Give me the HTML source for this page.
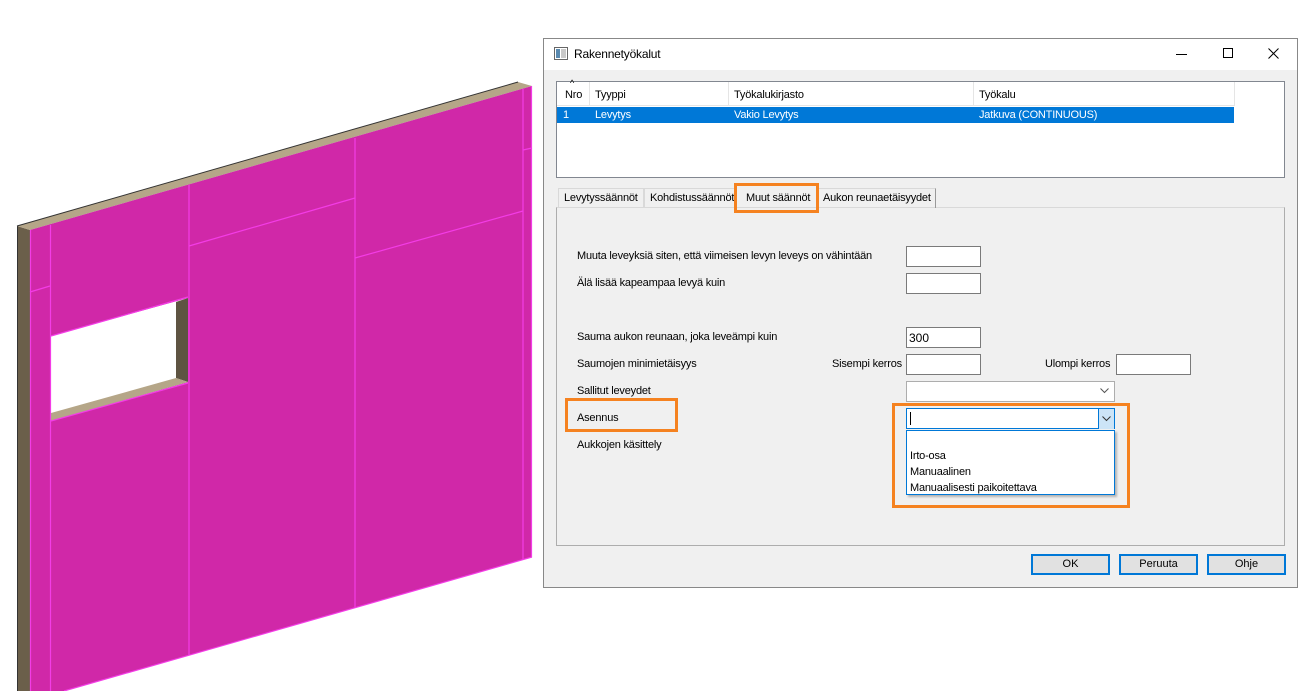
<!DOCTYPE html>
<html><head><meta charset="utf-8"><style>
*{margin:0;padding:0;box-sizing:border-box}
body{width:1308px;height:691px;background:#fff;position:relative;overflow:hidden;font-family:"Liberation Sans",sans-serif;font-size:11px;color:#000}
.a{position:absolute}
.t{position:absolute;white-space:nowrap;font-size:11px;letter-spacing:-0.2px}
.in{position:absolute;background:#fff;border:1px solid #7a7a7a;height:21px}
.ob{position:absolute;border:3px solid #f58220}
.btn{position:absolute;top:554px;width:79px;height:21px;background:#e1e1e1;border:2px solid #0078d7;text-align:center;line-height:17px;font-size:11px}
</style></head><body>
<svg class="a" style="left:0;top:0" width="545" height="691">
<polygon points="17,226 30,230 30,691 17,691" fill="#6b5f4a"/>
<line x1="17.5" y1="226" x2="17.5" y2="691" stroke="#333"/>
<polygon points="17,226 518,82 532,86 30,230" fill="#b5a688"/>
<line x1="17" y1="226" x2="518" y2="82" stroke="#333" stroke-width="1"/>
<polygon points="30,230 532,86 532,557 64,691 30,691" fill="#d028a8"/>
<polygon points="51,336 188,298 188,382 51,421" fill="#fff"/>
<polygon points="176,302 188,298 188,382 176,378" fill="#5e5442"/>
<polygon points="51,413 176,378 188,382 51,421" fill="#b5a688"/>
<g stroke="#f33ce6" stroke-width="1.2" fill="none">
<line x1="30.5" y1="230" x2="30.5" y2="691"/>
<line x1="50.5" y1="225" x2="50.5" y2="691"/>
<line x1="189" y1="185" x2="189" y2="655"/>
<line x1="355" y1="138" x2="355" y2="607"/>
<line x1="523" y1="89" x2="523" y2="560"/>
<line x1="531.5" y1="86" x2="531.5" y2="557"/>
<line x1="30" y1="292" x2="50" y2="286"/>
<line x1="189" y1="246" x2="355" y2="198"/>
<line x1="355" y1="258" x2="523" y2="211"/>
<line x1="523" y1="150" x2="532" y2="148"/>
<line x1="51" y1="336" x2="188" y2="297"/>
<line x1="51" y1="421" x2="188" y2="383"/>
<line x1="64" y1="691" x2="532" y2="557"/>
</g>
</svg>

<div class="a" style="left:543px;top:38px;width:755px;height:550px;background:#f0f0f0;border:1px solid #888"></div>
<div class="a" style="left:544px;top:39px;width:753px;height:31px;background:#fff"></div>
<svg class="a" style="left:554px;top:47px" width="14" height="13"><rect x="0.5" y="0.5" width="13" height="12" fill="#fff" stroke="#666"/><rect x="2" y="2" width="4" height="9" fill="#5a8ab0"/><rect x="7" y="2" width="5" height="9" fill="#c8c8c8"/></svg>
<div class="t" style="left:574px;top:47px;font-size:12px">Rakennetyökalut</div>
<div class="a" style="left:1176px;top:54px;width:11px;height:1px;background:#000"></div>
<div class="a" style="left:1223px;top:48px;width:10px;height:10px;border:1px solid #000"></div>
<svg class="a" style="left:1268px;top:48px" width="11" height="11"><path d="M0.5 0.5L10.5 10.5M10.5 0.5L0.5 10.5" stroke="#000" stroke-width="1"/></svg>

<div class="a" style="left:556px;top:81px;width:729px;height:97px;background:#fff;border:1px solid #828790"></div>
<div class="a" style="left:557px;top:82px;width:677px;height:24px;background:#fff;border-bottom:1px solid #e5e5e5"></div>
<div class="a" style="left:589px;top:82px;width:1px;height:24px;background:#e5e5e5"></div>
<div class="a" style="left:728px;top:82px;width:1px;height:24px;background:#e5e5e5"></div>
<div class="a" style="left:973px;top:82px;width:1px;height:24px;background:#e5e5e5"></div>
<div class="a" style="left:1234px;top:82px;width:1px;height:24px;background:#e5e5e5"></div>
<div class="t" style="left:570px;top:78px;font-size:9px">^</div>
<div class="t" style="left:565px;top:89px">Nro</div>
<div class="t" style="left:595px;top:89px">Tyyppi</div>
<div class="t" style="left:734px;top:89px">Työkalukirjasto</div>
<div class="t" style="left:979px;top:89px">Työkalu</div>
<div class="a" style="left:557px;top:107px;width:677px;height:16px;background:#0078d7"></div>
<div class="t" style="left:563px;top:109px;color:#fff">1</div>
<div class="t" style="left:595px;top:109px;color:#fff">Levytys</div>
<div class="t" style="left:734px;top:109px;color:#fff">Vakio Levytys</div>
<div class="t" style="left:979px;top:109px;color:#fff">Jatkuva (CONTINUOUS)</div>

<div class="a" style="left:556px;top:207px;width:729px;height:339px;border:1px solid #adadad;border-top-color:#d9d9d9;background:#f0f0f0"></div>
<div class="a" style="left:558px;top:188px;width:86px;height:20px;border:1px solid #d9d9d9;border-bottom:none"></div>
<div class="t" style="left:564px;top:192px">Levytyssäännöt</div>
<div class="a" style="left:644px;top:188px;width:92px;height:20px;border:1px solid #d9d9d9;border-bottom:none"></div>
<div class="t" style="left:650px;top:192px">Kohdistussäännöt</div>
<div class="t" style="left:746px;top:192px">Muut säännöt</div>
<div class="a" style="left:818px;top:188px;width:118px;height:20px;border:1px solid #d9d9d9;border-right-color:#999;border-bottom:none"></div>
<div class="t" style="left:823px;top:192px">Aukon reunaetäisyydet</div>
<div class="ob" style="left:734px;top:183px;width:85px;height:30px"></div>

<div class="t" style="left:577px;top:250px">Muuta leveyksiä siten, että viimeisen levyn leveys on vähintään</div>
<div class="in" style="left:906px;top:246px;width:75px"></div>
<div class="t" style="left:577px;top:277px">Älä lisää kapeampaa levyä kuin</div>
<div class="in" style="left:906px;top:273px;width:75px"></div>
<div class="t" style="left:577px;top:331px">Sauma aukon reunaan, joka leveämpi kuin</div>
<div class="in" style="left:906px;top:327px;width:75px;padding:3px 2px;font-size:12px">300</div>
<div class="t" style="left:577px;top:358px">Saumojen minimietäisyys</div>
<div class="t" style="left:832px;top:358px">Sisempi kerros</div>
<div class="in" style="left:906px;top:354px;width:75px"></div>
<div class="t" style="left:1045px;top:358px">Ulompi kerros</div>
<div class="in" style="left:1116px;top:354px;width:75px"></div>
<div class="t" style="left:577px;top:385px">Sallitut leveydet</div>
<div class="in" style="left:906px;top:381px;width:209px;border-color:#adadad"></div>
<svg class="a" style="left:1100px;top:388px" width="9" height="6"><path d="M0.5 0.5L4.5 4.5L8.5 0.5" stroke="#555" fill="none"/></svg>
<div class="t" style="left:577px;top:412px">Asennus</div>
<div class="ob" style="left:565px;top:398px;width:113px;height:34px"></div>
<div class="in" style="left:906px;top:408px;width:209px;border-color:#0078d7"></div>
<div class="a" style="left:910px;top:412px;width:1px;height:13px;background:#000"></div>
<div class="a" style="left:1098px;top:409px;width:16px;height:20px;background:#cce4f7;border-left:1px solid #0078d7"></div>
<svg class="a" style="left:1102px;top:416px" width="9" height="6"><path d="M0.5 0.5L4.5 4.5L8.5 0.5" stroke="#333" fill="none"/></svg>
<div class="a" style="left:906px;top:430px;width:209px;height:65px;background:#fff;border:1px solid #0078d7;box-shadow:2px 2px 2px rgba(0,0,0,.25)"></div>
<div class="t" style="left:910px;top:450px">Irto-osa</div>
<div class="t" style="left:910px;top:466px">Manuaalinen</div>
<div class="t" style="left:910px;top:482px">Manuaalisesti paikoitettava</div>
<div class="ob" style="left:892px;top:403px;width:238px;height:105px"></div>
<div class="t" style="left:577px;top:439px">Aukkojen käsittely</div>

<div class="btn" style="left:1031px">OK</div>
<div class="btn" style="left:1119px">Peruuta</div>
<div class="btn" style="left:1207px">Ohje</div>
</body></html>
